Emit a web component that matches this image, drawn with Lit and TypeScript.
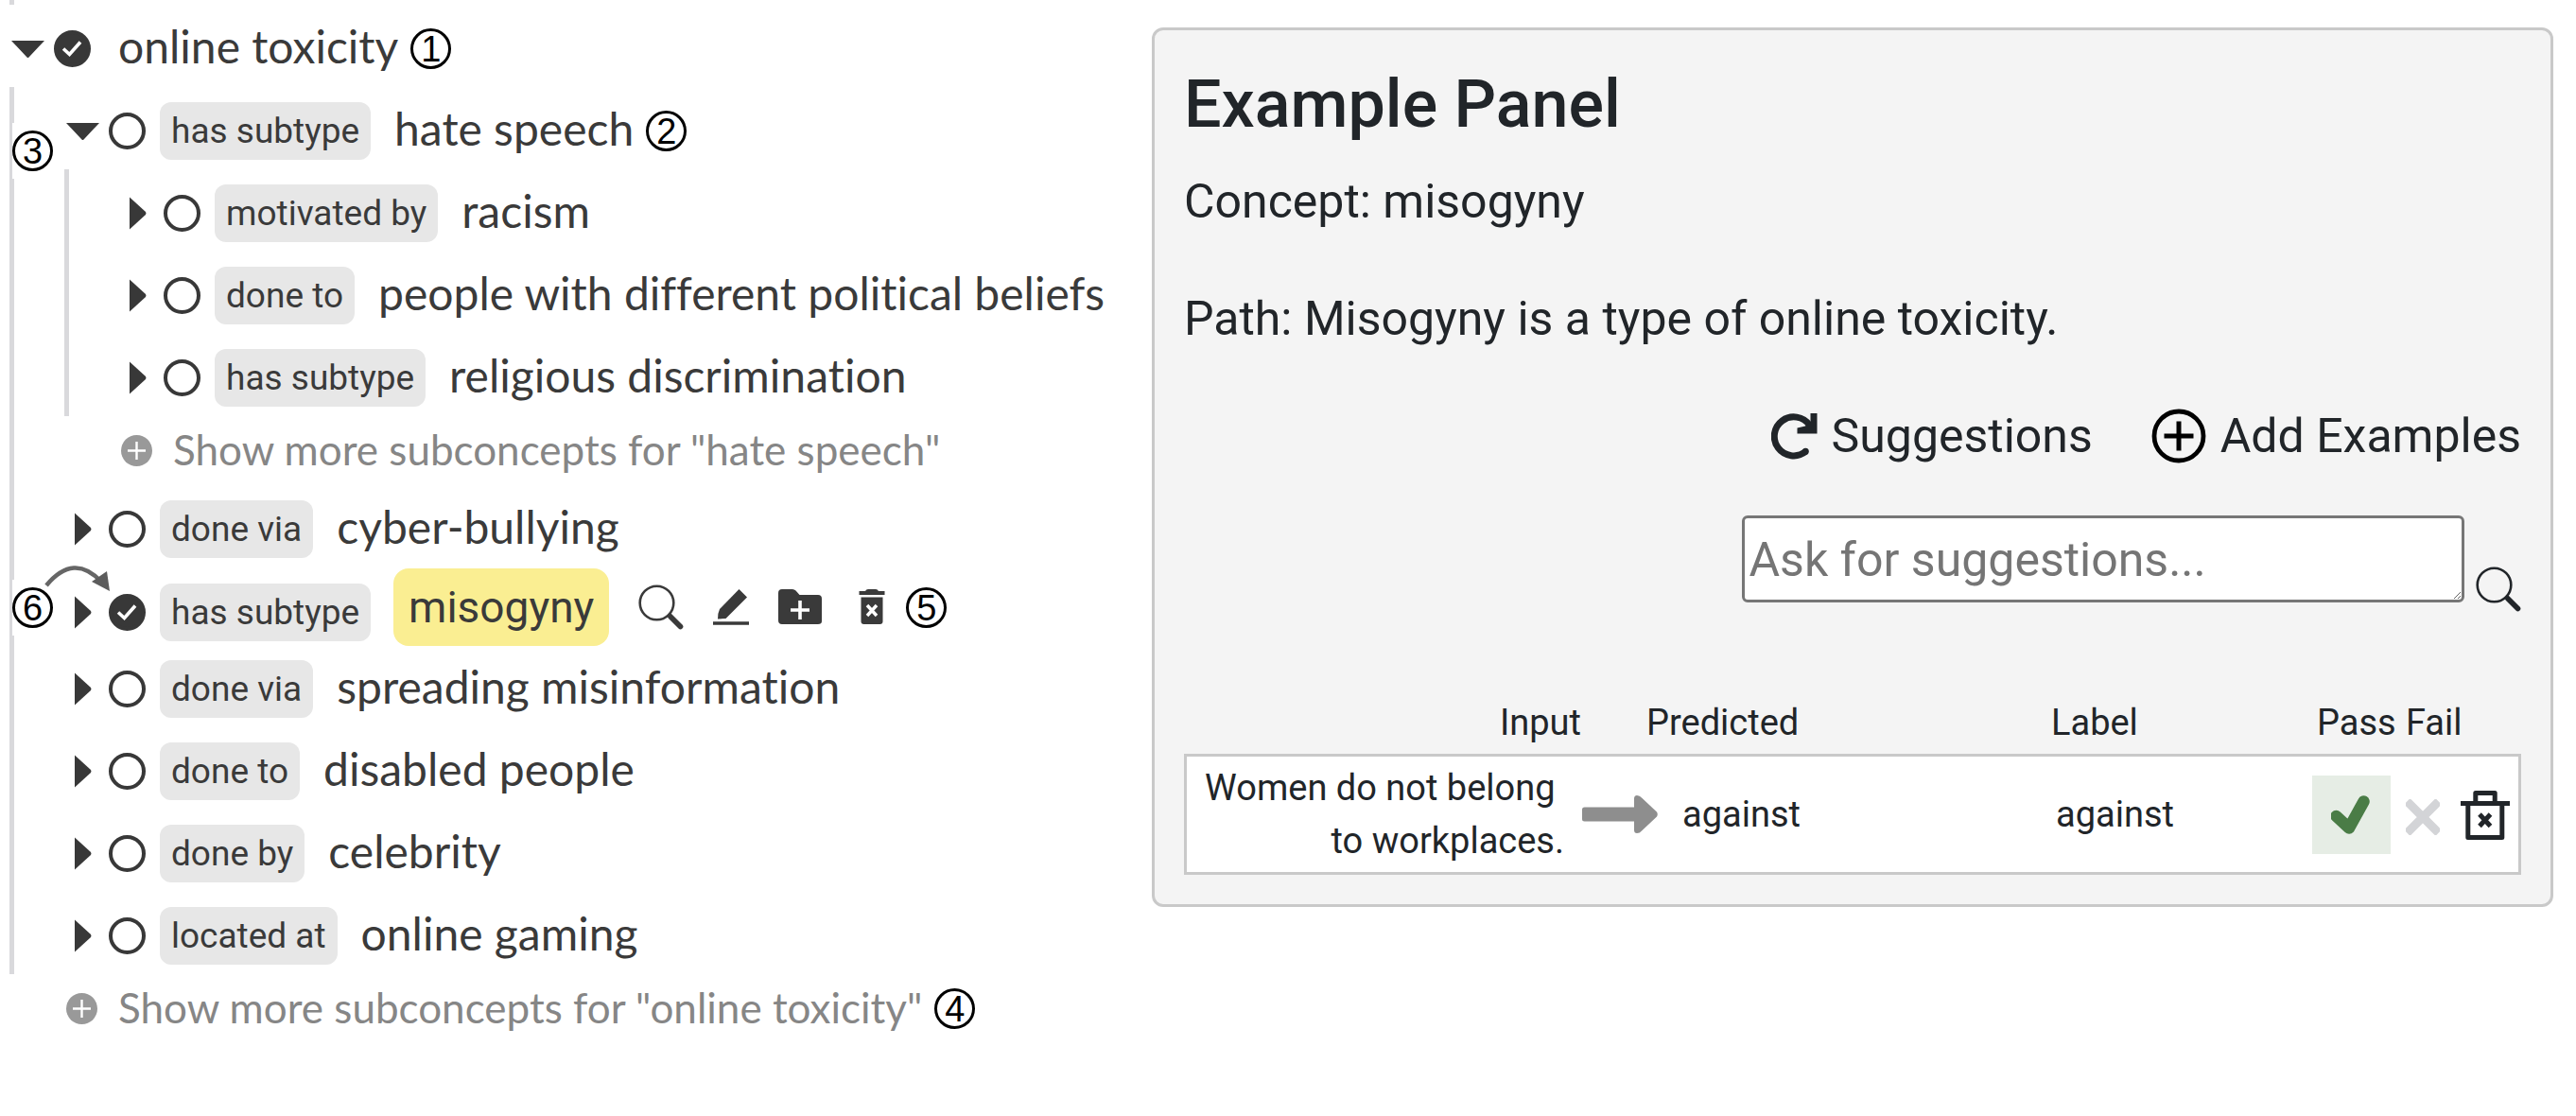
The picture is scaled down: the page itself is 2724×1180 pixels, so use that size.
import { LitElement, html, css, svg, nothing } from "lit";
import { customElement, property } from "lit/decorators.js";
import { classMap } from "lit/directives/class-map.js";

interface Concept {
  name: string;
  relation?: string;
  checked?: boolean;
  active?: boolean;
  badge?: number;
  sideBadge?: number;
  pointer?: boolean;
  moreBadge?: number;
  children?: Concept[];
}

interface Example {
  input: string[];
  predicted: string;
  label: string;
}

const TREE: Concept = {
  name: "online toxicity",
  checked: true,
  badge: 1,
  moreBadge: 4,
  children: [
    {
      name: "hate speech",
      relation: "has subtype",
      badge: 2,
      sideBadge: 3,
      children: [
        { name: "racism", relation: "motivated by" },
        { name: "people with different political beliefs", relation: "done to" },
        { name: "religious discrimination", relation: "has subtype" },
      ],
    },
    { name: "cyber-bullying", relation: "done via" },
    {
      name: "misogyny",
      relation: "has subtype",
      checked: true,
      active: true,
      badge: 5,
      sideBadge: 6,
      pointer: true,
    },
    { name: "spreading misinformation", relation: "done via" },
    { name: "disabled people", relation: "done to" },
    { name: "celebrity", relation: "done by" },
    { name: "online gaming", relation: "located at" },
  ],
};

const EXAMPLES: Example[] = [
  {
    input: ["Women do not belong\u00a0", "to workplaces."],
    predicted: "against",
    label: "against",
  },
];

const searchIcon = html`<svg class="icon" width="48" height="48" viewBox="0 0 48 48" aria-hidden="true">
  <circle cx="19.5" cy="19.5" r="17.8" fill="none" stroke="currentColor" stroke-width="2.6" />
  <path d="M31.5 31.5 L34.5 33" stroke="currentColor" stroke-width="4" />
  <path d="M34 34 L44.5 44.5" stroke="currentColor" stroke-width="5.6" stroke-linecap="round" />
</svg>`;

const buttonReset = css`
  button {
    display: inline-flex;
    align-items: center;
    margin: 0;
    padding: 0;
    border: 0;
    background: none;
    color: inherit;
    font: inherit;
    cursor: pointer;
  }
  .icon {
    display: block;
    flex: none;
  }
`;

@customElement("concept-node")
export class ConceptNode extends LitElement {
  @property({ attribute: false }) concept!: Concept;

  static styles = [
    buttonReset,
    css`
      :host {
        display: block;
      }
      .row {
        position: relative;
        display: flex;
        align-items: center;
        box-sizing: border-box;
        height: 87px;
        padding-top: 5px;
        white-space: nowrap;
      }
      .row.active {
        height: 82px;
        padding-top: 1px;
        align-items: flex-start;
      }
      .lead {
        display: flex;
        align-items: center;
      }
      .active .lead {
        align-self: flex-end;
        padding-bottom: 4px;
      }
      .caret {
        justify-content: center;
        width: 35px;
        height: 40px;
        margin-right: 10px;
      }
      .check {
        display: grid;
        place-items: center;
      }
      .check:last-child {
        margin-right: 4px;
      }
      .check > * {
        grid-area: 1 / 1;
      }
      .check input {
        appearance: none;
        width: 39px;
        height: 39px;
        margin: 0;
        border: 4px solid #383838;
        border-radius: 50%;
        background: #fff;
      }
      .check input:checked {
        background: #383838;
      }
      .check svg {
        pointer-events: none;
      }
      .tag {
        margin-left: 15px;
        padding: 0 12px;
        border-radius: 12px;
        background: #e7e7e7;
        font: 37px/61px Roboto, "Liberation Sans", sans-serif;
      }
      .label {
        margin-left: 25px;
        padding-bottom: 4px;
        font-size: 48px;
        line-height: 60px;
      }
      .badge {
        box-sizing: border-box;
        width: 43px;
        height: 43px;
        border: 3px solid #000;
        border-radius: 50%;
        background: #fff;
        color: #000;
        font: 38px/38px "Liberation Sans", Arial, sans-serif;
        text-align: center;
      }
      .row > .badge,
      .more .badge {
        margin-left: 13px;
      }
      .side {
        position: absolute;
        left: -57px;
        top: 38px;
        padding: 8px 0;
        background: #fff;
      }
      .active .side {
        top: 13px;
      }
      .pointer {
        position: absolute;
        left: -25px;
        top: -6px;
      }
      .focus {
        display: flex;
        align-items: center;
        gap: 31px;
        margin-left: 24px;
      }
      .highlight {
        padding: 0 16px;
        border-radius: 16px;
        background: #faee92;
        font: 450 46px/82px Roboto, "Liberation Sans", sans-serif;
      }
      .tail {
        display: flex;
        align-items: center;
        gap: 18px;
        margin-left: 4px;
      }
      .children {
        margin: 0 0 0 -2px;
        padding: 0 0 0 55px;
        border-left: 5px solid #d9d9dc;
        list-style: none;
      }
      .more {
        display: flex;
        align-items: center;
        height: 73px;
        margin-left: 58px;
        color: #868686;
        white-space: nowrap;
      }
      .more button {
        gap: 22px;
        font-size: 44px;
        line-height: 52px;
      }
      .more span {
        padding-bottom: 4px;
      }
    `,
  ];

  private badge(n?: number) {
    return n ? html`<div class="badge">${n}</div>` : nothing;
  }

  private renderTools(badge?: number) {
    return html`
      <button aria-label="Search">${searchIcon}</button>
      <button aria-label="Edit">
        <svg class="icon" width="38" height="38" viewBox="0 0 38 38">
          <path fill="currentColor" d="M27.5 0 L36 8.5 L13.5 31 L5 31.5 Q5 25 7 21 Z" />
          <path d="M0 36 H38" stroke="currentColor" stroke-width="3.4" />
        </svg>
      </button>
      <button aria-label="Add subconcept">
        <svg class="icon" width="46" height="38" viewBox="0 0 46 38">
          <path
            fill="currentColor"
            d="M4 0 H15 Q17 0 18.500 1.500 L22.500 6 H42 Q46 6 46 10 V34 Q46 37 42 37 H4 Q0 37 0 33 V4 Q0 0 4 0 Z"
          />
          <path d="M23 12 V32 M13 22 H33" stroke="#fff" stroke-width="3.6" />
        </svg>
      </button>
      <div class="tail">
        <button aria-label="Delete">
          <svg class="icon" width="36" height="38" viewBox="0 0 36 38">
            <path fill="currentColor" d="M4.500 2 H11 Q12 0 14 0 H22 Q24 0 25 2 H31.500 V6 H4.500 Z" />
            <path fill="currentColor" d="M6.500 8.500 H29.500 V34 Q29.500 37 26.500 37 H9.500 Q6.500 37 6.500 34 Z" />
            <path d="M13 17 L23 28 M23 17 L13 28" stroke="#fff" stroke-width="3.4" />
          </svg>
        </button>
        ${this.badge(badge)}
      </div>
    `;
  }

  render() {
    const c = this.concept;
    const open = !!c.children;
    return html`
      <div class=${classMap({ row: true, active: !!c.active })}>
        ${c.sideBadge ? html`<div class="side">${this.badge(c.sideBadge)}</div>` : nothing}
        ${c.pointer
          ? html`<svg class="pointer" width="76" height="36" viewBox="0 0 76 36" aria-hidden="true">
              <path d="M4 25 Q33 -10 62 21" fill="none" stroke="#666" stroke-width="4.500" />
              <path d="M68 10 L52 21 L71 31 Z" fill="#5c5c5c" />
            </svg>`
          : nothing}
        <div class="lead">
          <button class="caret" aria-expanded=${open ? "true" : "false"} aria-label=${c.name}>
            <svg class="icon" width="35" height="35" viewBox="0 0 35 35">
              ${open
                ? svg`<path d="M0 9 H35 L18.500 26.500 Q17.500 27.500 16.500 26.500 Z" fill="#383838" />`
                : svg`<path d="M9 0.500 L26 16 Q27 17.500 26 19 L9 34.500 Z" fill="#383838" />`}
            </svg>
          </button>
          <label class="check">
            <input type="checkbox" .checked=${!!c.checked} aria-label=${c.name} />
            ${c.checked
              ? html`<svg width="39" height="39" viewBox="0 0 39 39" aria-hidden="true">
                  <path d="M10 19.500 L16.500 25.500 L28 12.500" fill="none" stroke="#fff" stroke-width="3.600" />
                </svg>`
              : nothing}
          </label>
          ${c.relation ? html`<span class="tag">${c.relation}</span>` : nothing}
        </div>
        ${c.active
          ? html`<div class="focus">
              <span class="highlight">${c.name}</span>
              ${this.renderTools(c.badge)}
            </div>`
          : html`<span class="label">${c.name}</span>${this.badge(c.badge)}`}
      </div>
      ${c.children
        ? html`
            <ul class="children">
              ${c.children.map((k) => html`<li><concept-node .concept=${k}></concept-node></li>`)}
            </ul>
            <div class="more">
              <button>
                <svg class="icon" width="33" height="33" viewBox="0 0 33 33" aria-hidden="true">
                  <circle cx="16.500" cy="16.500" r="16.500" fill="#999" />
                  <path d="M16.500 7 V26 M7 16.500 H26" stroke="#fff" stroke-width="2.400" />
                </svg>
                <span>Show more subconcepts for "${c.name}"</span>
              </button>
              ${this.badge(c.moreBadge)}
            </div>
          `
        : nothing}
    `;
  }
}

@customElement("example-panel")
export class ExamplePanel extends LitElement {
  @property({ attribute: false }) examples: Example[] = [];

  static styles = [
    buttonReset,
    css`
      :host {
        display: block;
        box-sizing: border-box;
        padding: 39px 31px 31px;
        border: 3px solid #c9c9c9;
        border-radius: 12px;
        background: #f4f4f4;
        color: #212529;
        font: 50px/62px Roboto, "Liberation Sans", sans-serif;
      }
      h2 {
        margin: 0 0 33px;
        font-size: 70px;
        font-weight: 500;
        line-height: 78px;
      }
      p {
        margin: 0 0 62px;
      }
      .actions {
        display: flex;
        justify-content: flex-end;
        gap: 62px;
        margin-bottom: 53px;
      }
      .actions button {
        gap: 15px;
      }
      .ask {
        display: flex;
        justify-content: flex-end;
        align-items: flex-end;
        gap: 12px;
        margin-bottom: 89px;
      }
      textarea {
        box-sizing: border-box;
        width: 54%;
        height: 92px;
        margin: 0 0 10px;
        padding: 13px 4px 6px;
        border: 3px solid #767676;
        border-radius: 6px;
        background: #fff;
        font: inherit;
        overflow: auto;
      }
      textarea::placeholder {
        color: #757575;
      }
      table {
        width: 100%;
        border-spacing: 0;
        table-layout: fixed;
        font-size: 38px;
        line-height: 56px;
      }
      th {
        padding: 0 0 5px;
        font-weight: 400;
        text-align: left;
        white-space: nowrap;
      }
      td {
        padding: 5px 0;
        border: solid #c9c9c9;
        border-width: 3px 0;
        background: #fff;
      }
      td:first-child {
        border-left-width: 3px;
      }
      td:last-child {
        border-right-width: 3px;
      }
      .c-input {
        width: 420px;
      }
      .c-label {
        width: 276px;
      }
      .c-pass {
        width: 91px;
      }
      .c-fail {
        width: 66px;
      }
      .c-remove {
        width: 64px;
      }
      th.input {
        text-align: right;
      }
      td.input {
        padding-right: 18px;
        text-align: right;
      }
      th.predicted {
        padding-left: 69px;
      }
      .flow {
        display: flex;
        align-items: center;
        gap: 26px;
      }
      td.label {
        padding-left: 5px;
      }
      th.pass {
        padding-left: 5px;
      }
      td.fail,
      th.fail {
        padding-left: 8px;
      }
      .pass button {
        justify-content: center;
        width: 83px;
        height: 83px;
        background: #e6ede5;
        vertical-align: middle;
      }
      .fail button,
      .remove button {
        vertical-align: middle;
      }
    `,
  ];

  render() {
    return html`
      <h2>Example Panel</h2>
      <p>Concept: misogyny</p>
      <p>Path: Misogyny is a type of online toxicity.</p>
      <div class="actions">
        <button>
          <svg class="icon" width="49" height="49" viewBox="0 0 49 49" aria-hidden="true">
            <path d="M36.300 40.600 A20.500 20.500 0 1 1 40.500 12.500" fill="none" stroke="currentColor" stroke-width="7" />
            <circle cx="36.300" cy="40.300" r="3.500" fill="currentColor" />
            <path d="M41.500 0 H48.500 V21.500 H27.500 V15.500 L36 13.500 L41.500 9 Z" fill="currentColor" />
          </svg>
          Suggestions
        </button>
        <button>
          <svg class="icon" width="58" height="58" viewBox="0 0 58 58" aria-hidden="true">
            <circle cx="29" cy="29" r="26" fill="none" stroke="#000" stroke-width="4.800" />
            <path d="M29 13.500 V44.500 M13.500 29 H44.500" stroke="#000" stroke-width="5" />
          </svg>
          Add Examples
        </button>
      </div>
      <div class="ask">
        <textarea rows="1" placeholder="Ask for suggestions..." aria-label="Ask for suggestions"></textarea>
        <button aria-label="Search">${searchIcon}</button>
      </div>
      <table>
        <colgroup>
          <col class="c-input" />
          <col />
          <col class="c-label" />
          <col class="c-pass" />
          <col class="c-fail" />
          <col class="c-remove" />
        </colgroup>
        <thead>
          <tr>
            <th class="input">Input</th>
            <th class="predicted">Predicted</th>
            <th>Label</th>
            <th class="pass">Pass</th>
            <th class="fail">Fail</th>
            <th></th>
          </tr>
        </thead>
        <tbody>
          ${this.examples.map(
            (e) => html`<tr>
              <td class="input">${e.input.map((line) => html`<div>${line}</div>`)}</td>
              <td>
                <div class="flow">
                  <svg class="icon" width="81" height="40" viewBox="0 0 81 40" aria-hidden="true">
                    <path
                      d="M3.500 12.500 H56 V3.500 Q56 0 59 0 Q62 0 64 2.500 L80 17.500 Q81.500 20 80 22.500 L64 37.500 Q62 40 59 40 Q56 40 56 36.500 V27.500 H3.500 Q1 27.500 1 25 V15 Q1 12.500 3.500 12.500 Z"
                      fill="#8e8e8e"
                    />
                  </svg>
                  <span>${e.predicted}</span>
                </div>
              </td>
              <td class="label">${e.label}</td>
              <td class="pass">
                <button aria-label="Pass">
                  <svg class="icon" width="44" height="44" viewBox="0 0 44 44">
                    <path d="M5.500 24 L19 36.500 L34.500 8.500" fill="none" stroke="#4a7c46" stroke-width="12.500" stroke-linecap="round" stroke-linejoin="round" />
                  </svg>
                </button>
              </td>
              <td class="fail">
                <button aria-label="Fail">
                  <svg class="icon" width="36" height="38" viewBox="0 0 36 38">
                    <path d="M4.500 5.500 L31.500 32.500 M31.500 5.500 L4.500 32.500" stroke="#d3d4d7" stroke-width="9" stroke-linecap="square" />
                  </svg>
                </button>
              </td>
              <td class="remove">
                <button aria-label="Remove">
                  <svg class="icon" width="52" height="54" viewBox="0 0 52 54">
                    <g fill="none" stroke="currentColor" stroke-width="5" stroke-linejoin="round">
                      <path d="M0 13.500 H52" />
                      <path d="M15.800 13.500 V2.500 H36.200 V13.500" />
                      <path d="M7.800 13.500 V49.500 H43.800 V13.500" />
                      <path d="M20 25 L31.500 37.500 M31.500 25 L20 37.500" />
                    </g>
                  </svg>
                </button>
              </td>
            </tr>`,
          )}
        </tbody>
      </table>
    `;
  }
}

@customElement("app-root")
export class AppRoot extends LitElement {
  static styles = css`
    :host {
      display: block;
      background: #fff;
      color: #3a3a3a;
      font-family: Lato, "Liberation Sans", sans-serif;
      font-variant-ligatures: no-common-ligatures;
    }
    .layout {
      display: grid;
      grid-template-columns: minmax(0, 1194fr) minmax(0, 1482fr);
      gap: 24px;
      align-items: start;
      padding-right: 24px;
    }
    .tree {
      padding-left: 12px;
    }
    .stub {
      width: 5px;
      height: 5px;
      margin-left: -2px;
      background: #d9d9dc;
    }
    example-panel {
      margin-top: 29px;
    }
  `;

  render() {
    return html`
      <main class="layout">
        <nav class="tree">
          <div class="stub"></div>
          <concept-node .concept=${TREE}></concept-node>
        </nav>
        <example-panel .examples=${EXAMPLES}></example-panel>
      </main>
    `;
  }
}
